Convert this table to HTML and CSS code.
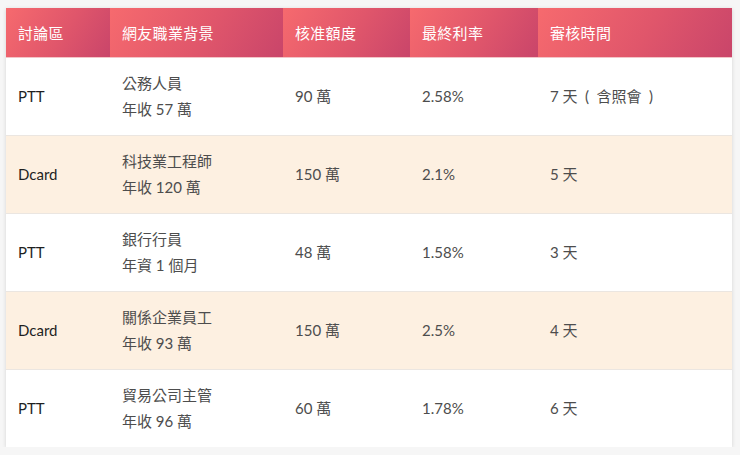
FILE: index.html
```html
<!DOCTYPE html>
<html lang="zh-Hant">
<head>
<meta charset="utf-8">
<link rel="stylesheet" href="styles.css">
</head>
<body>
<div class="wrap">
<table class="loans">
  <colgroup>
    <col class="c1"><col class="c2"><col class="c3"><col class="c4"><col class="c5">
  </colgroup>
  <thead>
    <tr>
      <th>討論區</th>
      <th>網友職業背景</th>
      <th>核准額度</th>
      <th>最終利率</th>
      <th>審核時間</th>
    </tr>
  </thead>
  <tbody>
    <tr>
      <td class="src">PTT</td>
      <td>公務人員<br>年收 57 萬</td>
      <td>90 萬</td>
      <td>2.58%</td>
      <td>7 天&ensp;(&ensp;含照會&ensp;)</td>
    </tr>
    <tr class="alt">
      <td class="src">Dcard</td>
      <td>科技業工程師<br>年收 120 萬</td>
      <td>150 萬</td>
      <td>2.1%</td>
      <td>5 天</td>
    </tr>
    <tr>
      <td class="src">PTT</td>
      <td>銀行行員<br>年資 1 個月</td>
      <td>48 萬</td>
      <td>1.58%</td>
      <td>3 天</td>
    </tr>
    <tr class="alt">
      <td class="src">Dcard</td>
      <td>關係企業員工<br>年收 93 萬</td>
      <td>150 萬</td>
      <td>2.5%</td>
      <td>4 天</td>
    </tr>
    <tr>
      <td class="src">PTT</td>
      <td>貿易公司主管<br>年收 96 萬</td>
      <td>60 萬</td>
      <td>1.78%</td>
      <td>6 天</td>
    </tr>
  </tbody>
</table>
</div>
</body>
</html>
```
FILE: styles.css
```css
html, body {
  margin: 0;
  padding: 0;
  background: #f6f6f6;
}
body {
  font-family: Lato, "Noto Sans CJK TC", sans-serif;
  font-size: 15px;
  color: #4d4d4d;
}
.wrap {
  padding: 8px 8px 0 6px;
}
.loans {
  width: 726px;
  border-collapse: collapse;
  table-layout: fixed;
  background: #fff;
  box-shadow: 0 1px 4px rgba(0, 0, 0, 0.14);
}
.c1 { width: 104px; }
.c2 { width: 173px; }
.c3 { width: 127px; }
.c4 { width: 128px; }
.c5 { width: 194px; }
.loans th {
  height: 49px;
  padding: 0 12px;
  text-align: left;
  font-weight: 400;
  color: #fff;
  font-size: 15px;
  letter-spacing: 0.3px;
  background: linear-gradient(120deg, #f66a6e 0%, #e0566b 55%, #c9456a 100%);
  border-bottom: 1px solid #f3c5c8;
  box-sizing: border-box;
}
.loans td {
  height: 78px;
  padding: 0 12px;
  line-height: 26px;
  vertical-align: middle;
  border-top: 1px solid #ebe6e1;
  box-sizing: border-box;
}
.loans tbody tr:first-child td {
  border-top: none;
}
.loans tr.alt td {
  background: #fdf0e1;
}
.loans td.src {
  color: #1f1f1f;
  font-weight: 400;
}
```
